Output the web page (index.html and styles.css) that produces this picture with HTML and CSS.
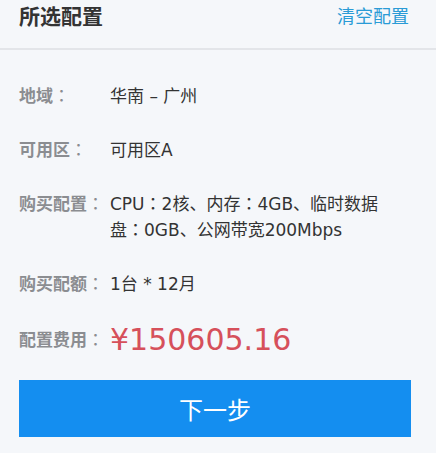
FILE: index.html
```html
<!DOCTYPE html>
<html lang="zh-CN">
<head>
    <meta charset="UTF-8">
    <meta name="viewport" content="width=device-width, initial-scale=1.0">
    <title>所选配置</title>
    <link rel="stylesheet" href="styles.css">
</head>
<body>

<div class="panel">
    <div class="panel-header">
        <div class="panel-title">所选配置</div>
        <a class="clear-link" href="#">清空配置</a>
    </div>

    <div class="panel-body">
        <div class="row">
            <div class="label">地域</div>
            <div class="value">华南 – 广州</div>
        </div>
        <div class="row">
            <div class="label">可用区</div>
            <div class="value">可用区A</div>
        </div>
        <div class="row">
            <div class="label">购买配置</div>
            <div class="value">CPU<span class="colon">：</span>2核、内存<span class="colon">：</span>4GB、临时数据盘<span class="colon">：</span>0GB、公网带宽200Mbps</div>
        </div>
        <div class="row">
            <div class="label">购买配额</div>
            <div class="value">1台 * 12月</div>
        </div>
        <div class="row row-price">
            <div class="label">配置费用</div>
            <div class="value price">¥150605.16</div>
        </div>

        <button class="next-btn">下一步</button>
    </div>
</div>

</body>
</html>
```

FILE: styles.css
```css
:root {
    --bg-color: #f5f7fa;
    --line-color: #e3e5e9;
    --title-color: #333333;
    --label-color: #8b8d91;
    --value-color: #333333;
    --link-color: #2a9bd6;
    --price-color: #d6505b;
    --btn-color: #148ef0;
}
html, body {
    margin: 0;
    padding: 0;
    background-color: var(--bg-color);
}
body {
    font-family: 'DejaVu Sans', 'Noto Sans CJK SC', sans-serif;
    color: var(--value-color);
    text-spacing-trim: space-all;
}
.panel { width: 436px; }
.panel-header {
    display: flex;
    justify-content: space-between;
    align-items: flex-start;
    height: 48px;
    padding: 0 27px 0 19px;
    border-bottom: 2px solid var(--line-color);
    font-family: 'Noto Sans CJK SC', sans-serif;
}
.panel-title {
    font-size: 21px;
    font-weight: bold;
    line-height: 30px;
    color: var(--title-color);
}
.clear-link {
    font-size: 18px;
    line-height: 30px;
    color: var(--link-color);
    text-decoration: none;
}
.panel-body {
    padding: 33px 0 0 19px;
}
.row {
    display: flex;
    align-items: flex-start;
    margin-bottom: 28px;
    font-size: 17px;
    line-height: 26px;
}
.label {
    width: 91px;
    flex-shrink: 0;
    color: var(--label-color);
    font-weight: bold;
}
/* 冒号居中显示 */
.label::after {
    content: "：";
}
.label::after,
.colon {
    display: inline-block;
    width: 1em;
    line-height: 1;
    text-align: center;
    font-family: 'Noto Sans CJK TC', sans-serif;
    font-weight: normal;
}
.value {
    width: 285px;
    color: var(--value-color);
}
.row-price {
    padding-top: 2px;
    margin-bottom: 27px;
}
.price {
    font-size: 30px;
    color: var(--price-color);
}
.next-btn {
    display: block;
    width: 392px;
    height: 57px;
    border: none;
    background-color: var(--btn-color);
    color: #ffffff;
    font-family: 'Noto Sans CJK SC', sans-serif;
    font-size: 24px;
}
```
